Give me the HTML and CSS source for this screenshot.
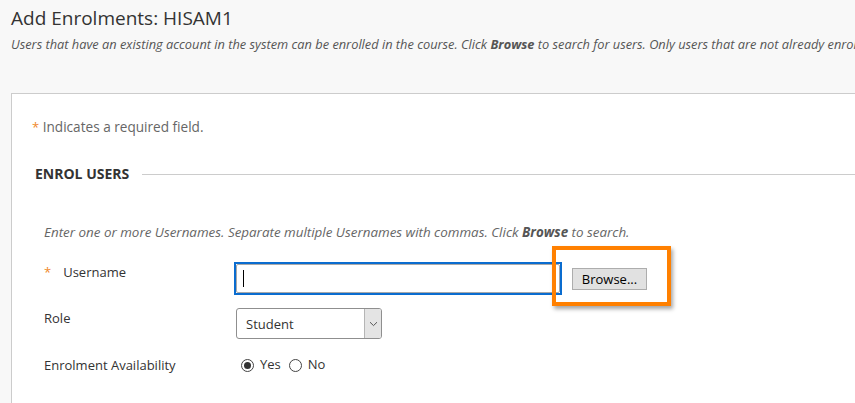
FILE: index.html
```html
<!DOCTYPE html>
<html lang="en">
<head>
<meta charset="utf-8">
<title>Add Enrolments: HISAM1</title>
<link rel="stylesheet" href="styles.css">
</head>
<body>
<header class="page-head">
  <h1 class="page-title">Add Enrolments: HISAM1</h1>
  <p class="intro">Users that have an existing account in the system can be enrolled in the course. Click <b>Browse</b> to search for users. Only users that are not already enrolled in the course are displayed.</p>
</header>
<section class="panel">
  <p class="req"><span class="star">*</span> Indicates a required field.</p>
  <div class="sec-head">
    <h2 class="sec-title">ENROL USERS</h2>
    <span class="rule"></span>
  </div>
  <div class="fields">
    <p class="instr">Enter one or more Usernames. Separate multiple Usernames with commas. Click <b>Browse</b> to search.</p>
    <div class="row row-user">
      <label class="lbl" for="user"><span class="star star-lbl">*</span>Username</label>
      <div class="ctrl">
        <div class="input-wrap">
          <input id="user" class="text-in" type="text">
          <span class="caret"></span>
        </div>
        <div class="browse-wrap">
          <button class="btn" type="button">Browse...</button>
          <span class="highlight"></span>
        </div>
      </div>
    </div>
    <div class="row row-role">
      <label class="lbl" for="role">Role</label>
      <div class="ctrl">
        <div class="select-wrap">
          <select id="role" class="sel"><option>Student</option></select>
          <span class="sel-arrow"><svg width="9" height="6" viewBox="0 0 9 6"><path d="M1 1.2 L4.5 4.6 L8 1.2" fill="none" stroke="#555" stroke-width="1"/></svg></span>
        </div>
      </div>
    </div>
    <div class="row row-avail">
      <span class="lbl">Enrolment Availability</span>
      <div class="ctrl radios">
        <span class="radio checked"></span><span class="rtxt">Yes</span>
        <span class="radio"></span><span class="rtxt">No</span>
      </div>
    </div>
  </div>
</section>
</body>
</html>
```
FILE: styles.css
```css
html, body {
  margin: 0;
  padding: 0;
  background: #f8f8f8;
  overflow: hidden;
  height: 403px;
}
body {
  font-family: "Open Sans", "DejaVu Sans", sans-serif;
  color: #333;
}
.page-head {
  padding: 6px 0 0 11px;
  white-space: nowrap;
  overflow: hidden;
}
.page-title {
  margin: 0;
  font-size: 19px;
  font-weight: 400;
  line-height: 24px;
  color: #333;
}
.intro {
  margin: 6px 0 0 0;
  font-size: 12.8px;
  line-height: 16px;
  font-style: italic;
  color: #555;
}
.intro b { font-weight: 700; color: #555; }

.panel {
  margin: 41px -40px 0 11px;
  background: #fff;
  border: 1px solid #ccc;
  border-right: none;
  padding: 24px 0 40px 0;
  height: 400px;
}
.req {
  margin: 0 0 0 20px;
  font-size: 13.6px;
  line-height: 18px;
  color: #666;
}
.star {
  color: #f0892a;
  font-size: 13px;
}
.sec-head {
  margin: 29px 0 0 23px;
  display: flex;
  align-items: center;
  gap: 13px;
}
.sec-title {
  margin: 0;
  font-size: 14px;
  font-weight: 700;
  line-height: 18px;
  color: #333;
}
.rule {
  flex: 1;
  height: 1px;
  background: #ccc;
}
.fields {
  padding-left: 32px;
}
.instr {
  margin: 40px 0 0 0;
  font-size: 13.4px;
  line-height: 18px;
  font-style: italic;
  color: #666;
}
.instr b { color: #555; }
.row {
  display: flex;
  align-items: flex-start;
}
.lbl {
  width: 190px;
  flex: none;
  font-size: 13px;
  line-height: 18px;
  color: #333;
}
.star-lbl { margin-right: 12px; }
.ctrl {
  display: flex;
  align-items: center;
}
.row-user { margin-top: 21px; }
.row-user .lbl { padding-top: 1px; }
.input-wrap {
  position: relative;
  border: 2px solid #0a6ccf;
  width: 324px;
  height: 29px;
}
.text-in {
  box-sizing: border-box;
  width: 100%;
  height: 100%;
  margin: 0;
  border: 1px solid #a9a9a9;
  border-radius: 2px;
  padding: 0 6px;
  font: 13px "Open Sans", sans-serif;
  outline: none;
  background: #fff;
}
.caret {
  position: absolute;
  left: 7px;
  top: 6px;
  width: 1px;
  height: 17px;
  background: #000;
}
.browse-wrap {
  position: relative;
  margin-left: 10px;
}
.btn {
  display: block;
  box-sizing: border-box;
  width: 75px;
  height: 22px;
  margin: 0;
  padding: 0;
  border: 1px solid #adadad;
  background: #e1e1e1;
  font: 13px "Open Sans", sans-serif;
  line-height: 18px;
  color: #000;
}
.highlight {
  position: absolute;
  left: -20px;
  top: -22px;
  width: 111px;
  height: 52px;
  border: 4px solid #ff8000;
  box-shadow: 2px 3px 4px rgba(0, 0, 0, 0.35);
}
.row-role { margin-top: 13px; }
.row-role .lbl { padding-top: 1px; }
.select-wrap {
  position: relative;
  margin-left: 2px;
  width: 146px;
  height: 31px;
}
.sel {
  -webkit-appearance: none;
  appearance: none;
  box-sizing: border-box;
  width: 100%;
  height: 100%;
  margin: 0;
  padding: 0 0 0 9px;
  border: 1px solid #8f8f8f;
  border-radius: 3px;
  background: #fff;
  font: 13px "Open Sans", sans-serif;
  color: #333;
}
.sel-arrow {
  position: absolute;
  right: 1px;
  top: 1px;
  bottom: 1px;
  width: 16px;
  background: #e4e4e4;
  border-left: 1px solid #b5b5b5;
  border-radius: 0 2px 2px 0;
  display: flex;
  align-items: center;
  justify-content: center;
}
.row-avail { margin-top: 17px; }
.radios {
  padding-left: 7px;
  height: 18px;
}
.radio {
  box-sizing: border-box;
  width: 13px;
  height: 13px;
  border: 1px solid #444;
  border-radius: 50%;
  background: #fff;
  display: flex;
  align-items: center;
  justify-content: center;
  margin-top: 1px;
}
.radio.checked::after {
  content: "";
  width: 7px;
  height: 7px;
  border-radius: 50%;
  background: #333;
}
.rtxt {
  font-size: 13px;
  line-height: 18px;
  color: #333;
  margin: 0 8px 0 6px;
  position: relative;
  top: -1px;
}
```
